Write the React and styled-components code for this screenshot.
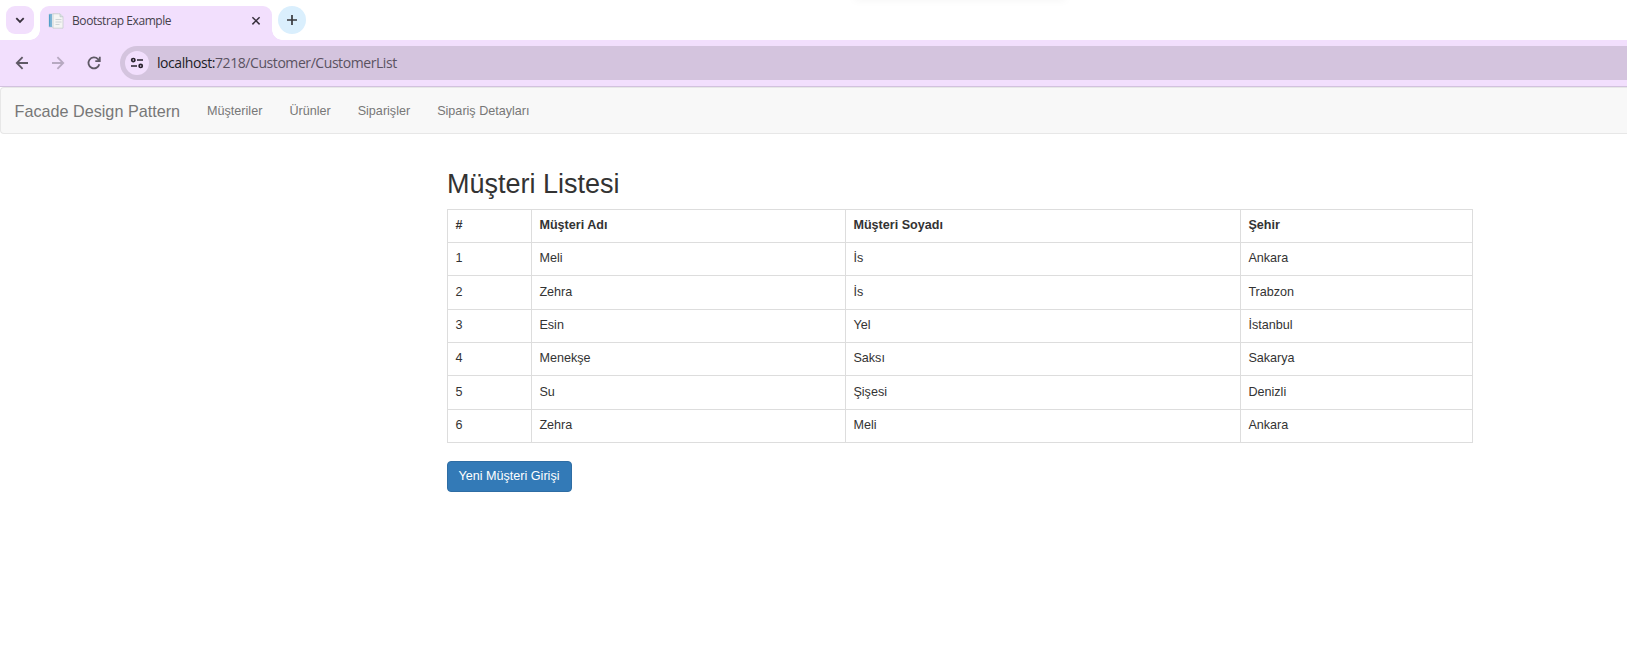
import React from "react";
import styled, { createGlobalStyle } from "styled-components";

const GlobalStyle = createGlobalStyle`
  *, *::before, *::after { box-sizing: border-box; }
  html, body { margin: 0; padding: 0; background: #fff; overflow: hidden; }
  body { font-family: "Liberation Sans", Arial, sans-serif; font-size: 12.6px; line-height: 18px; color: #333; }
`;

const Browser = styled.div`
  font-family: "Open Sans", "Segoe UI", sans-serif;
`;

const TabStrip = styled.div`
  position: relative;
  display: flex;
  align-items: flex-start;
  height: 40px;
  padding: 6px 0 0 6px;
  background: #fff;
`;

const StripShadow = styled.div`
  position: absolute;
  top: -6px;
  left: 854px;
  width: 212px;
  height: 6px;
  box-shadow: 0 0 9px rgba(0, 0, 0, 0.05);
`;

const RoundButton = styled.div`
  display: flex;
  align-items: center;
  justify-content: center;
  width: 28px;
  height: 28px;
  border-radius: ${(p) => p.$radius};
  background: ${(p) => p.$bg};
`;

const Tab = styled.div`
  position: relative;
  display: flex;
  align-items: center;
  width: 232px;
  height: 34px;
  margin: 0 6px;
  padding: 0 10px 5px 8px;
  border-radius: 9px 9px 0 0;
  background: #f2dffd;

  &::before, &::after {
    content: "";
    position: absolute;
    bottom: 0;
    width: 10px;
    height: 10px;
  }
  &::before { left: -10px; background: radial-gradient(circle at 0 0, transparent 9.5px, #f2dffd 10px); }
  &::after { right: -10px; background: radial-gradient(circle at 100% 0, transparent 9.5px, #f2dffd 10px); }
`;

const TabTitle = styled.span`
  flex: 1;
  margin-left: 8px;
  padding-top: 1px;
  font-size: 12px;
  letter-spacing: -0.42px;
  color: #45414b;
  white-space: nowrap;
`;

const Toolbar = styled.div`
  display: flex;
  align-items: center;
  height: 47px;
  padding-left: 12px;
  border-bottom: 1px solid #d2c2de;
  background: #f2dffd;
`;

const NavIcons = styled.div`
  display: flex;
  gap: 16px;
  width: 108px;
`;

const AddressBar = styled.div`
  display: flex;
  flex: 1;
  align-items: center;
  height: 34px;
  padding-left: 5px;
  border-radius: 17px 0 0 17px;
  background: #d4c4de;
`;

const SiteInfo = styled.div`
  display: flex;
  align-items: center;
  justify-content: center;
  width: 24px;
  height: 24px;
  margin-right: 8px;
  border-radius: 50%;
  background: #f2dffd;
`;

const Url = styled.span`
  font-size: 14px;
  letter-spacing: -0.43px;
  color: #5a5261;
  white-space: nowrap;
`;

const Host = styled.span`
  color: #211d26;
`;

const Navbar = styled.nav`
  display: flex;
  align-items: center;
  height: 47px;
  padding-left: 13.5px;
  border: 1px solid #e7e7e7;
  border-right: 0;
  border-radius: 4px 0 0 4px;
  background: #f8f8f8;
  color: #777;
`;

const Brand = styled.span`
  font-size: 16.2px;
  margin-right: 13.5px;
`;

const NavLink = styled.span`
  padding: 0 13.5px;
  white-space: nowrap;
`;

const Content = styled.main`
  width: 1026px;
  margin: 35px 0 0 447px;
`;

const Heading = styled.h2`
  margin: 0 0 9px;
  font-size: 27px;
  font-weight: 400;
  line-height: 31px;
`;

const Table = styled.table`
  width: 1026px;
  border-collapse: collapse;
  table-layout: fixed;
`;

const Column = styled.col`
  width: ${(p) => p.$width}px;
`;

const Row = styled.tr`
  height: ${(p) => p.$height}px;
`;

const Cell = styled.td`
  padding: ${(p) => p.$top || 6}px 7px 0 7.4px;
  border: 1px solid #ddd;
  text-align: left;
  vertical-align: top;
  line-height: 18px;
`;

const Button = styled.button`
  display: block;
  width: 125px;
  height: 31px;
  margin-top: 18px;
  padding: 0 1px 2px 0;
  border: 1px solid #2e6da4;
  border-radius: 4px;
  background: #337ab7;
  color: #fff;
  font: 12.6px/18px "Liberation Sans", Arial, sans-serif;
  white-space: nowrap;
`;

const Line = styled.svg`
  display: block;
  flex: none;
  fill: none;
  stroke: ${(p) => p.$color};
  stroke-width: ${(p) => p.$weight || 1.8};
`;

const links = ["Müşteriler", "Ürünler", "Siparişler", "Sipariş Detayları"];

const customers = [
  ["1", "Meli", "İs", "Ankara"],
  ["2", "Zehra", "İs", "Trabzon"],
  ["3", "Esin", "Yel", "İstanbul"],
  ["4", "Menekşe", "Saksı", "Sakarya"],
  ["5", "Su", "Şişesi", "Denizli"],
  ["6", "Zehra", "Meli", "Ankara"],
];

function PageIcon() {
  return (
    <svg width="16" height="16" viewBox="0 0 16 16">
      <path d="M1 1h9v13H1z" fill="#eef3f5" stroke="#c5d0d6" strokeWidth=".7" />
      <path d="M1 1h3v13H1z" fill="#7db4d6" />
      <path d="M1.6 2v11" stroke="#4f9dca" strokeWidth="1" />
      <path d="M5 .8h7l3 3v11.4H5z" fill="#f5f5f4" stroke="#c7cdce" strokeWidth=".8" />
      <path d="M12 .8v3h3" fill="#d9e1e2" stroke="#bcc7c8" strokeWidth=".7" />
      <path d="M7.5 6.5h6M7.5 9h6M7.5 11.5h4" stroke="#c8d0d1" strokeWidth=".9" />
    </svg>
  );
}

export default function App() {
  return (
    <>
      <GlobalStyle />
      <Browser>
        <TabStrip>
          <StripShadow />
          <RoundButton $radius="9px" $bg="#f2dffd">
            <Line width="12" height="12" viewBox="0 0 12 12" $color="#38313d" $weight="1.8">
              <path d="M2.3 4.2 6 7.9l3.7-3.7" />
            </Line>
          </RoundButton>
          <Tab>
            <PageIcon />
            <TabTitle>Bootstrap Example</TabTitle>
            <Line width="12" height="12" viewBox="0 0 12 12" $color="#38313d" $weight="1.5">
              <path d="m2.4 2.2 7.2 7.2m0-7.2-7.2 7.2" />
            </Line>
          </Tab>
          <RoundButton $radius="50%" $bg="#daeffd">
            <Line width="12" height="12" viewBox="0 0 12 12" $color="#38393d" $weight="1.7">
              <path d="M6 1v10M1 6h10" />
            </Line>
          </RoundButton>
        </TabStrip>
        <Toolbar>
          <NavIcons>
            <Line width="20" height="20" viewBox="0 0 20 20" $color="#5f5965">
              <path d="M16 10H5m5.6-5.8L4.8 10l5.8 5.8" />
            </Line>
            <Line width="20" height="20" viewBox="0 0 20 20" $color="#b7a9c1">
              <path d="M4 10h11M9.4 4.2l5.8 5.8-5.8 5.8" />
            </Line>
            <Line width="20" height="20" viewBox="0 0 20 20" $color="#5f5965">
              <path d="M15.3 11.2A5.5 5.5 0 1 1 14 6.2l1.5 1.6M15.8 3.8v4.4h-4.5" />
            </Line>
          </NavIcons>
          <AddressBar>
            <SiteInfo>
              <Line width="14" height="14" viewBox="0 0 14 14" $color="#29232e" $weight="1.7">
                <circle cx="3.3" cy="4.1" r="1.6" />
                <path d="M7 4h6M1 10h6" />
                <circle cx="10.7" cy="9.9" r="1.6" />
              </Line>
            </SiteInfo>
            <Url><Host>localhost:</Host>7218/Customer/CustomerList</Url>
          </AddressBar>
        </Toolbar>
      </Browser>
      <Navbar>
        <Brand>Facade Design Pattern</Brand>
        {links.map((label) => (
          <NavLink key={label}>{label}</NavLink>
        ))}
      </Navbar>
      <Content>
        <Heading>Müşteri Listesi</Heading>
        <Table>
          <colgroup>
            <Column $width={84} />
            <Column $width={314} />
            <Column $width={395} />
            <Column $width={232} />
          </colgroup>
          <thead>
            <Row $height={33}>
              {["#", "Müşteri Adı", "Müşteri Soyadı", "Şehir"].map((title) => (
                <Cell as="th" key={title}>{title}</Cell>
              ))}
            </Row>
          </thead>
          <tbody>
            {customers.map((customer, i) => (
              <Row key={customer[0]} $height={i % 3 === 1 ? 34 : 33}>
                {customer.map((value, c) => (
                  <Cell key={c} $top={i % 3 === 1 ? 7 : 6}>{value}</Cell>
                ))}
              </Row>
            ))}
          </tbody>
        </Table>
        <Button>Yeni Müşteri Girişi</Button>
      </Content>
    </>
  );
}
